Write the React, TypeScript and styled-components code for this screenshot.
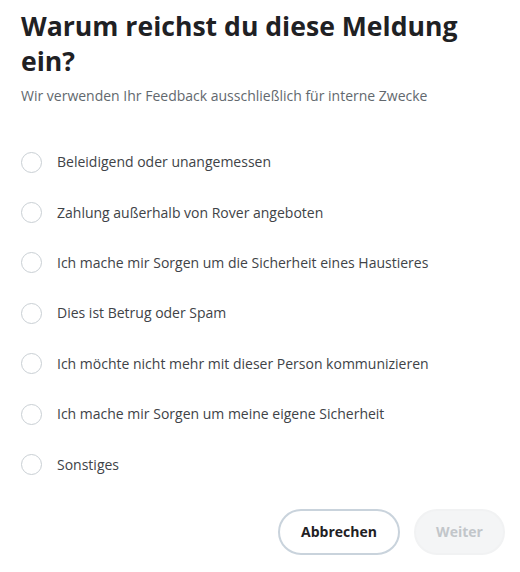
import React from 'react'
import styled, { createGlobalStyle } from 'styled-components'

const GlobalStyle = createGlobalStyle`
  body {
    margin: 0;
    background: #fff;
    font-family: 'Open Sans', 'Lato', sans-serif;
  }
`

const Wrap = styled.div`
  width: 520px;
  height: 572px;
  box-sizing: border-box;
  padding: 9px 15px 0 21px;
  display: flex;
  flex-flow: column nowrap;
`

const Title = styled.h1`
  margin: 0;
  max-width: 470px;
  font-size: 26.6px;
  line-height: 35px;
  font-weight: 700;
  color: #1f2124;
`

const Sub = styled.p`
  margin: 7px 0 0;
  font-size: 14px;
  line-height: 20px;
  color: #62686e;
`

const List = styled.div`
  margin-top: 31px;
  display: flex;
  flex-flow: column nowrap;
`

const Option = styled.label`
  display: flex;
  flex-flow: row nowrap;
  align-items: center;
  height: 50.4px;
  cursor: pointer;
`

const Circle = styled.span`
  width: 21px;
  height: 21px;
  box-sizing: border-box;
  border-radius: 50%;
  border: 1px solid #c9cfd4;
  flex: none;
  margin-right: 15px;
`

const Label = styled.span`
  font-size: 14px;
  line-height: 20px;
  color: #404347;
`

const Footer = styled.div`
  margin-top: 19px;
  display: flex;
  flex-flow: row nowrap;
  justify-content: flex-end;
  gap: 14px;
  padding-right: 0;
`

const Button = styled.button<{ $disabled?: boolean; $w: number }>`
  width: ${(p) => p.$w}px;
  height: 46px;
  box-sizing: border-box;
  padding: 0;
  border-radius: 999px;
  font-family: inherit;
  font-size: 14px;
  font-weight: 700;
  border: 2px solid ${(p) => (p.$disabled ? '#f1f2f3' : '#c9d3dc')};
  background: ${(p) => (p.$disabled ? '#f4f5f6' : '#fff')};
  color: ${(p) => (p.$disabled ? '#c2c6ca' : '#1f2124')};
`

const options = [
  'Beleidigend oder unangemessen',
  'Zahlung außerhalb von Rover angeboten',
  'Ich mache mir Sorgen um die Sicherheit eines Haustieres',
  'Dies ist Betrug oder Spam',
  'Ich möchte nicht mehr mit dieser Person kommunizieren',
  'Ich mache mir Sorgen um meine eigene Sicherheit',
  'Sonstiges',
]

export default function App() {
  return (
    <>
      <GlobalStyle />
      <Wrap>
        <Title>Warum reichst du diese Meldung ein?</Title>
        <Sub>Wir verwenden Ihr Feedback ausschließlich für interne Zwecke</Sub>
        <List>
          {options.map((o) => (
            <Option key={o}>
              <Circle />
              <Label>{o}</Label>
            </Option>
          ))}
        </List>
        <Footer>
          <Button $w={122}>Abbrechen</Button>
          <Button $w={91} $disabled>
            Weiter
          </Button>
        </Footer>
      </Wrap>
    </>
  )
}
